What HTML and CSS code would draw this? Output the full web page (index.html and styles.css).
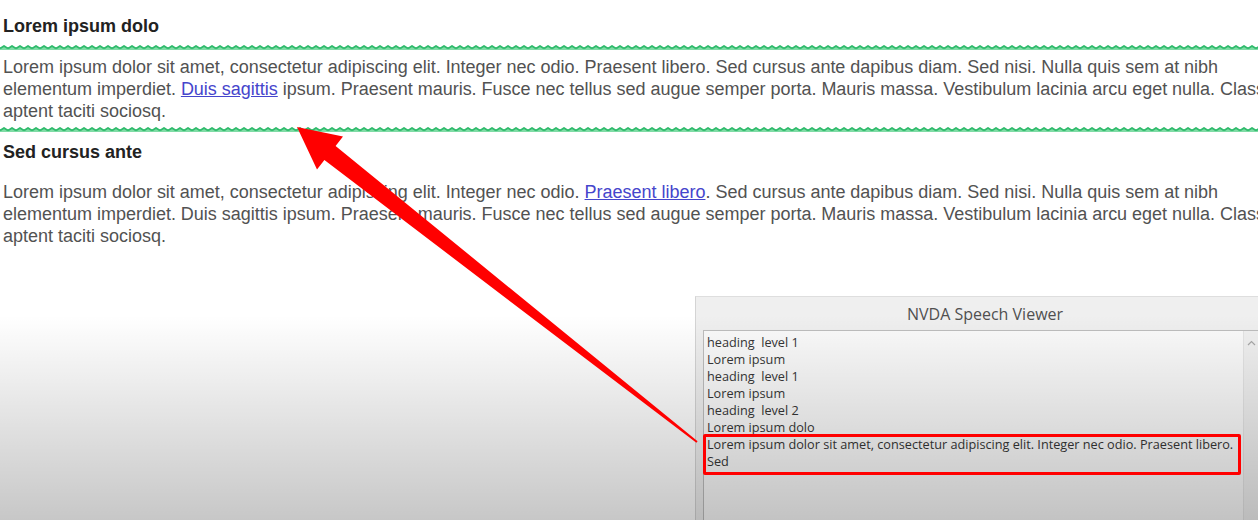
FILE: index.html
```html
<!DOCTYPE html>
<html lang="en">
<head>
<meta charset="utf-8">
<title>NVDA demo</title>
<link rel="stylesheet" href="styles.css">
</head>
<body>
<main class="page">
  <h2 class="heading first">Lorem ipsum dolo</h2>
  <p class="text focused">Lorem ipsum dolor sit amet, consectetur adipiscing elit. Integer nec odio. Praesent libero. Sed cursus ante dapibus diam. Sed nisi. Nulla quis sem at nibh<br>elementum imperdiet. <a href="#" class="link">Duis sagittis</a> ipsum. Praesent mauris. Fusce nec tellus sed augue semper porta. Mauris massa. Vestibulum lacinia arcu eget nulla. Class<br>aptent taciti sociosq.</p>
  <h2 class="heading second">Sed cursus ante</h2>
  <p class="text plain">Lorem ipsum dolor sit amet, consectetur adipiscing elit. Integer nec odio. <a href="#" class="link">Praesent libero</a>. Sed cursus ante dapibus diam. Sed nisi. Nulla quis sem at nibh<br>elementum imperdiet. Duis sagittis ipsum. Praesent mauris. Fusce nec tellus sed augue semper porta. Mauris massa. Vestibulum lacinia arcu eget nulla. Class<br>aptent taciti sociosq.</p>
</main>

<section class="viewer">
  <div class="viewer-title">NVDA Speech Viewer</div>
  <div class="log">
    <ul class="log-lines">
      <li>heading  level 1</li>
      <li>Lorem ipsum</li>
      <li>heading  level 1</li>
      <li>Lorem ipsum</li>
      <li>heading  level 2</li>
      <li>Lorem ipsum dolo</li>
      <li>Lorem ipsum dolor sit amet, consectetur adipiscing elit. Integer nec odio. Praesent libero.<br>Sed</li>
    </ul>
    <div class="scrollbar">
      <svg class="scroll-up" width="9" height="6" viewBox="0 0 9 6"><path d="M1 5 L4.5 1.5 L8 5" fill="none" stroke="#a8a8a8" stroke-width="1.2"/></svg>
    </div>
  </div>
</section>

<div class="shade"></div>

<div class="callout"></div>
<svg class="arrow" width="1258" height="520" viewBox="0 0 1258 520">
  <polygon fill="#ff0000" points="297,127 343,136.5 335.6,145.9 697.6,441.2 696.4,442.8 324.4,160.1 317,169.5"/>
</svg>
</body>
</html>
```

FILE: styles.css
```css
html, body {
  margin: 0;
  padding: 0;
}

body {
  position: relative;
  width: 1258px;
  height: 520px;
  overflow: hidden;
  background: #ffffff;
  font-family: "Liberation Sans", Arial, sans-serif;
}

.page {
  padding-top: 15px;
}

.heading {
  margin: 0;
  padding-left: 3px;
  font-size: 18px;
  line-height: 22px;
  font-weight: bold;
  color: #222222;
}

.heading.second {
  margin-top: 9px;
}

.text {
  margin: 0;
  padding-left: 3px;
  font-size: 18px;
  line-height: 22px;
  color: #525252;
  white-space: nowrap;
  letter-spacing: -0.01px;
}

.focused {
  margin-top: 8px;
  padding-top: 11px;
  padding-bottom: 10px;
  background-image:
    url("data:image/svg+xml,%3Csvg xmlns='http://www.w3.org/2000/svg' width='8' height='5'%3E%3Crect x='0' y='2' width='8' height='3' fill='%2380dca6'/%3E%3Cpath d='M0 3.6 L4 1 L8 3.6' fill='none' stroke='%2330bb6c' stroke-width='1.8'/%3E%3C/svg%3E"),
    url("data:image/svg+xml,%3Csvg xmlns='http://www.w3.org/2000/svg' width='8' height='5'%3E%3Crect x='0' y='2' width='8' height='3' fill='%2380dca6'/%3E%3Cpath d='M0 3.6 L4 1 L8 3.6' fill='none' stroke='%2330bb6c' stroke-width='1.8'/%3E%3C/svg%3E");
  background-repeat: repeat-x, repeat-x;
  background-position: 0 0, 0 100%;
  background-size: 8px 5px, 8px 5px;
}

.plain {
  margin-top: 18px;
}

.link {
  color: #4545cc;
  text-decoration: underline;
}

/* Speech viewer window */
.viewer {
  position: absolute;
  left: 695px;
  top: 296px;
  width: 578px;
  height: 260px;
  background: #efefef;
  border-left: 1px solid #d4d4d4;
  border-top: 1px solid #dedede;
  font-family: "Open Sans", "Noto Sans", sans-serif;
}

.viewer-title {
  height: 33px;
  line-height: 34px;
  text-align: center;
  font-size: 16px;
  color: #505050;
}

.log {
  display: flex;
  margin-left: 7px;
  width: 555px;
  height: 220px;
  border-top: 1px solid #bdbdbd;
  border-left: 1px solid #bdbdbd;
  background: #fafafa;
}

.log-lines {
  flex: 1;
  margin: 0;
  padding: 3px 0 0 3px;
  list-style: none;
  font-size: 12.7px;
  line-height: 17px;
  color: #363636;
}

.log-lines li {
  white-space: pre;
}

.scrollbar {
  width: 16px;
  background: #f0f0f0;
  border-left: 1px solid #e4e4e4;
  display: flex;
  justify-content: center;
  align-items: flex-start;
  padding-top: 9px;
  box-sizing: border-box;
}

.scroll-up {
  display: block;
}

/* video shading toward the bottom */
.shade {
  position: absolute;
  left: 0;
  top: 0;
  width: 1258px;
  height: 520px;
  background: linear-gradient(to bottom, rgba(0, 0, 0, 0) 315px, rgba(0, 0, 0, 0.22) 520px);
  pointer-events: none;
}

/* annotations */
.callout {
  position: absolute;
  left: 703px;
  top: 434px;
  width: 538px;
  height: 41px;
  box-sizing: border-box;
  border: 3px solid #ff0000;
  border-radius: 2px;
}

.arrow {
  position: absolute;
  left: 0;
  top: 0;
  pointer-events: none;
}
```
